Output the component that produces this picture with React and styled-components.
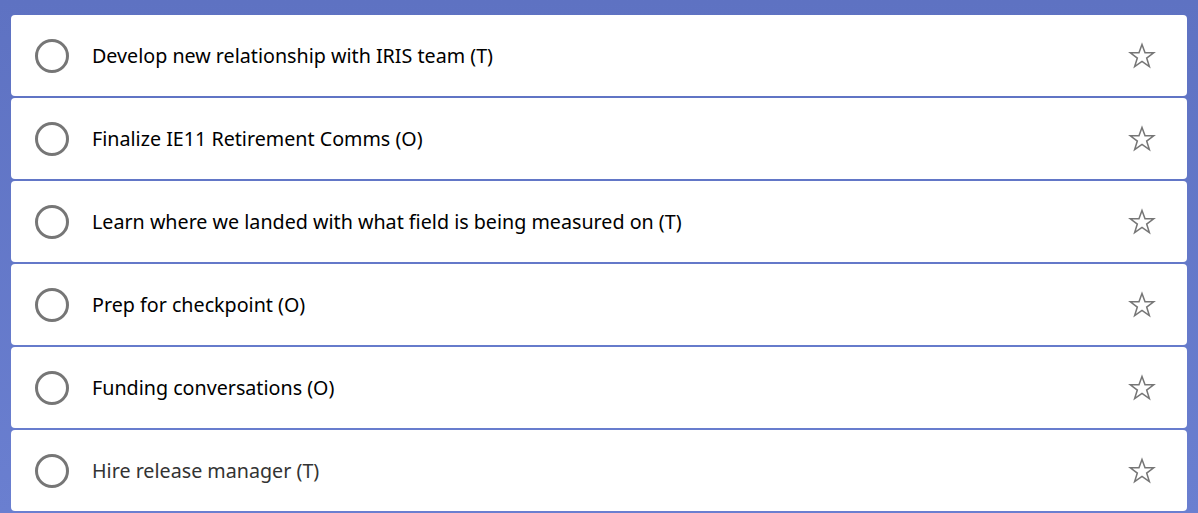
import React from 'react'
import styled, { createGlobalStyle } from 'styled-components'

const GlobalSC = createGlobalStyle`
  html, body {
    margin: 0;
    padding: 0;
  }
  body {
    font-family: "Noto Sans", "Open Sans", sans-serif;
  }
`

const PageSC = styled.div`
  width: 1198px;
  height: 513px;
  box-sizing: border-box;
  padding: 15px 11px 0 11px;
  background: linear-gradient(180deg, #5e72c2 0%, #6a7fd0 100%);
  overflow: hidden;
  display: flex;
  flex-direction: column;
  gap: 2px;
`

const RowSC = styled.div`
  height: 81px;
  flex: none;
  background: #fff;
  border-radius: 4px;
  display: flex;
  align-items: center;
  padding: 0 24px 0 24px;
`

const CheckSC = styled.span`
  width: 28px;
  height: 28px;
  border: 3px solid #767676;
  border-radius: 50%;
  flex: none;
  margin-right: 23px;
`

const TitleSC = styled.span`
  flex: 1;
  font-size: 19.7px;
  color: ${props => (props.dim ? '#333' : '#000')};
`

const StarSC = styled.svg`
  width: 28px;
  height: 28px;
  margin-right: 7px;
  flex: none;
`

const tasks = [
  'Develop new relationship with IRIS team (T)',
  'Finalize IE11 Retirement Comms (O)',
  'Learn where we landed with what field is being measured on (T)',
  'Prep for checkpoint (O)',
  'Funding conversations (O)',
  'Hire release manager (T)',
]

const Star = () => (
  <StarSC viewBox="0 0 24 24">
    <path
      d="M12 2.2l2.6 7.1h7.4l-6 4.5 2.3 7.3L12 16.6l-6.3 4.5 2.3-7.3-6-4.5h7.4z"
      fill="none"
      stroke="#767676"
      strokeWidth="1.3"
      strokeLinejoin="miter"
    />
  </StarSC>
)

export default function App() {
  return (
    <>
      <GlobalSC />
      <PageSC>
        {tasks.map((t, i) => (
          <RowSC key={i}>
            <CheckSC />
            <TitleSC dim={i === tasks.length - 1}>{t}</TitleSC>
            <Star />
          </RowSC>
        ))}
      </PageSC>
    </>
  )
}
